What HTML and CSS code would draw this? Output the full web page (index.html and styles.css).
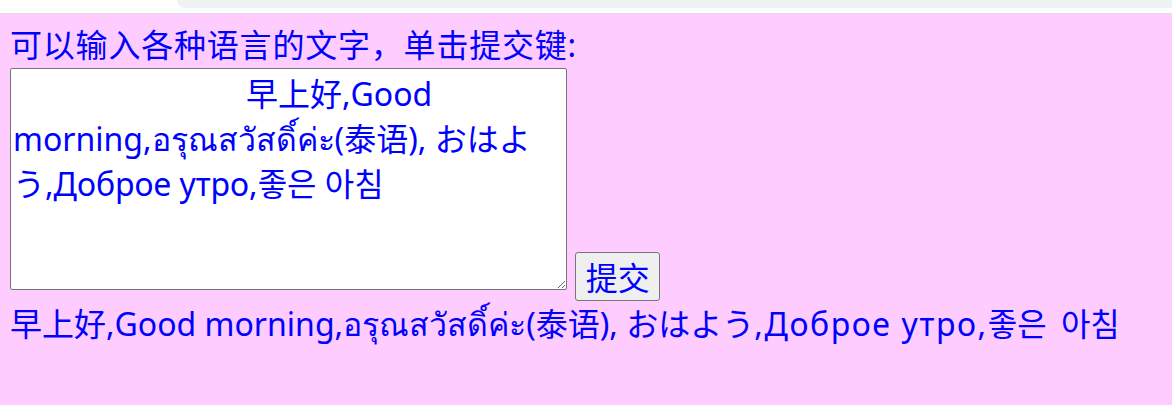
FILE: index.html
```html
<!DOCTYPE html>
<html lang="zh-CN">
<head>
<meta charset="utf-8">
<title>多语言输入</title>
<link rel="stylesheet" href="styles.css">
</head>
<body>
<div class="chrome"><div class="chrome-pill"></div></div>
<div class="page">
<form class="form">
<div class="label">可以输入各种语言的文字，单击提交键:</div>
<div class="row"><textarea class="input" name="text">                            早上好,Good morning,อรุณสวัสดิ์ค่ะ(泰语), おはよう,Доброе утро,좋은 아침</textarea> <button class="submit" type="button">提交</button></div>
</form>
<div class="output">早上好,Good morning,<span lang="th">อรุณสวัสดิ์ค่ะ</span>(泰语), <span lang="ja">おはよう</span><span class="ru" lang="ru">,Доброе утро,</span><span class="ko" lang="ko">좋은 아침</span></div>
</div>
</body>
</html>
```
FILE: styles.css
```css
html, body {
  margin: 0;
  padding: 0;
  background: #ffccff;
}
.chrome {
  height: 13px;
  background: #ffffff;
  border-bottom: 1px solid #dedede;
  display: flex;
}
.chrome-pill {
  margin-left: 177px;
  flex: 1;
  height: 8px;
  background: #f0f1f3;
  border-bottom-left-radius: 8px;
}
.page {
  padding: 8px 10px;
  font-family: "Noto Sans", "Noto Sans CJK SC", sans-serif;
  font-size: 32px;
  color: #0000ff;
  line-height: 46px;
}
.form {
  margin: 0;
}
.label {
  white-space: nowrap;
  letter-spacing: 0.8px;
}
.row {
  line-height: 46px;
}
.input {
  box-sizing: border-box;
  width: 557px;
  height: 222px;
  margin: 0;
  padding: 2px;
  border: 1px solid #767676;
  border-radius: 2px;
  background: #ffffff;
  font-family: inherit;
  font-size: 32px;
  line-height: 45px;
  color: #0000ff;
  vertical-align: baseline;
  resize: both;
}
.submit {
  box-sizing: border-box;
  width: 85px;
  height: 49px;
  margin: 0;
  padding: 0 6px;
  border: 1px solid #767676;
  border-radius: 3px;
  background: #efefef;
  font-family: inherit;
  font-size: 32px;
  color: #0000ff;
}
.output {
  white-space: nowrap;
}
.ru {
  letter-spacing: 1.6px;
}
.ko {
  word-spacing: 6px;
}
```
